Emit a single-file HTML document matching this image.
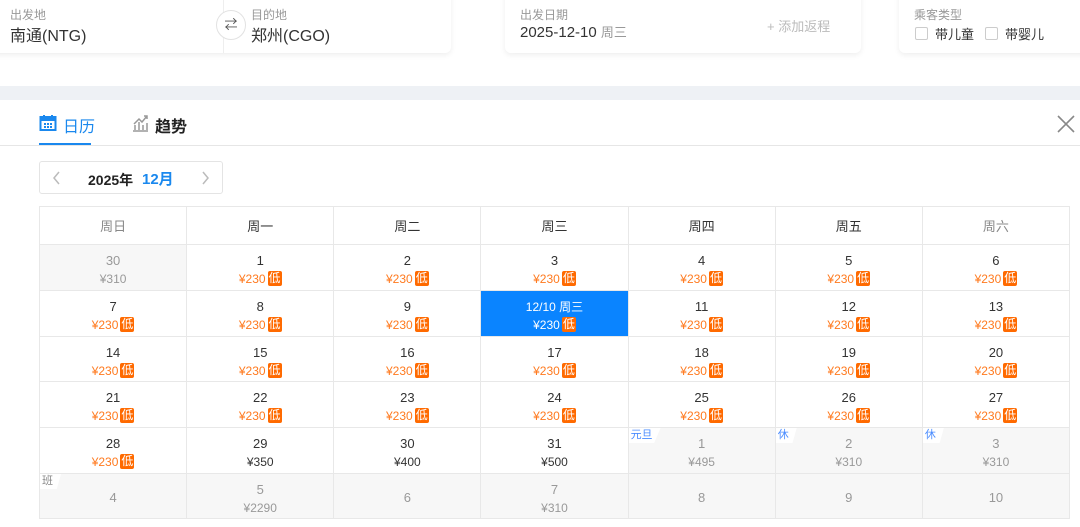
<!DOCTYPE html>
<html><head><meta charset="utf-8"><style>
*{margin:0;padding:0;box-sizing:border-box}
body{width:1080px;height:527px;background:#fff;font-family:"Liberation Sans","Noto Sans CJK SC",sans-serif;position:relative;overflow:hidden;color:#333}
.card{position:absolute;background:#fff;border-radius:6px;box-shadow:0 2px 6px rgba(0,0,0,.07);top:-10px;height:63px}
.lbl{position:absolute;font-size:12px;color:#999}
.val{position:absolute;font-size:16px;color:#333}
.band{position:absolute;left:0;top:86px;width:1080px;height:14px;background:#eef1f5}
table{position:absolute;left:39px;top:206px;border-collapse:collapse;table-layout:fixed;width:1031px}
td{border:1px solid #e8e8e8;text-align:center;vertical-align:top;position:relative;width:147px}
th{border:1px solid #e8e8e8;height:38px;font-weight:normal;font-size:13px;color:#333}
td .n{display:block;font-size:13px;line-height:16px;margin-top:8px;color:#333}
td .p{display:block;font-size:12px;line-height:16px;margin-top:2px;color:#ff7a1f}
.lo{display:inline-block;font-style:normal;background:#ff6a00;color:#fff;font-size:12px;line-height:15px;height:15px;padding:0 1px;border-radius:2px;margin-left:2px;vertical-align:top;margin-top:0}
.g{background:#f7f7f7}
.g .n{color:#999}.g .p{color:#999}
.d .p{color:#333}
.sel{background:#0a84ff}
.sel .n,.sel .p{color:#fff}
.tag{position:absolute;left:0;top:0;font-size:11px;line-height:15px;padding:0 8px 0 2px;background:#fff;clip-path:polygon(0 0,100% 0,80% 100%,0 100%);color:#4a8cff}
</style></head><body>
<div class="card" style="left:-10px;width:461px">
 <div class="lbl" style="left:20px;top:16px">出发地</div>
 <div class="val" style="left:20px;top:32px">南通(NTG)</div>
 <div style="position:absolute;left:233px;top:10px;width:1px;height:53px;background:#eee"></div>
 <div style="position:absolute;left:226px;top:20px;width:30px;height:30px;border:1px solid #e2e2e2;border-radius:50%;background:#fff;text-align:center;line-height:28px;font-size:13px;color:#555">⇄</div>
 <div class="lbl" style="left:261px;top:16px">目的地</div>
 <div class="val" style="left:261px;top:32px">郑州(CGO)</div>
</div>
<div class="card" style="left:505px;width:356px">
 <div class="lbl" style="left:15px;top:16px">出发日期</div>
 <div class="val" style="left:15px;top:32px;font-size:15px">2025-12-10 <span style="font-size:13px;color:#999">周三</span></div>
 <div style="position:absolute;left:262px;top:26px;font-size:13px;color:#bbb">+ 添加返程</div>
</div>
<div class="card" style="left:899px;width:200px">
 <div class="lbl" style="left:15px;top:16px">乘客类型</div>
 <div style="position:absolute;left:16px;top:37px;width:13px;height:13px;border:1px solid #ccc;border-radius:2px"></div>
 <div style="position:absolute;left:36px;top:34px;font-size:13px">带儿童</div>
 <div style="position:absolute;left:86px;top:37px;width:13px;height:13px;border:1px solid #ccc;border-radius:2px"></div>
 <div style="position:absolute;left:106px;top:34px;font-size:13px">带婴儿</div>
</div>
<div class="band"></div>
<svg style="position:absolute;left:39px;top:114px" width="18" height="18" viewBox="0 0 18 18"><rect x="1.5" y="3" width="15" height="13" fill="none" stroke="#1a88ee" stroke-width="2"/><rect x="1.5" y="3" width="15" height="4" fill="#1a88ee"/><rect x="4" y="1" width="2" height="3" fill="#1a88ee"/><rect x="12" y="1" width="2" height="3" fill="#1a88ee"/><g fill="#1a88ee"><rect x="5" y="9" width="2" height="2"/><rect x="8" y="9" width="2" height="2"/><rect x="11" y="9" width="2" height="2"/><rect x="5" y="12" width="2" height="2"/><rect x="8" y="12" width="2" height="2"/><rect x="11" y="12" width="2" height="2"/></g></svg>
<div style="position:absolute;left:63px;top:113px;font-size:16px;color:#1a88ee">日历</div>
<svg style="position:absolute;left:131px;top:114px" width="18" height="18" viewBox="0 0 18 18" fill="none" stroke="#999" stroke-width="1.5"><path d="M2 17h15M4 16v-5M8 16v-8M12 16v-5M16 16v-7M3 10l5-5 3 3 5-6M13 2h3v3"/></svg>
<div style="position:absolute;left:155px;top:113px;font-size:16px;font-weight:bold;color:#222">趋势</div>
<div style="position:absolute;left:39px;top:143px;width:52px;height:2px;background:#1a88ee"></div>
<div style="position:absolute;left:0;top:145px;width:1080px;height:1px;background:#e6e6e6"></div>
<svg style="position:absolute;left:1057px;top:115px" width="18" height="18" viewBox="0 0 18 18" stroke="#888" stroke-width="1.6"><path d="M1 1L17 17M17 1L1 17"/></svg>
<div style="position:absolute;left:39px;top:161px;width:184px;height:33px;border:1px solid #e4e4e4;border-radius:3px">
 <svg style="position:absolute;left:12px;top:9px" width="10" height="14" viewBox="0 0 10 14" fill="none" stroke="#bbb" stroke-width="1.5"><path d="M7 1L2 7l5 6"/></svg>
 <span style="position:absolute;left:48px;top:8px;font-size:14px;font-weight:bold;color:#222">2025年</span>
 <span style="position:absolute;left:102px;top:6px;font-size:15px;font-weight:bold;color:#1a88ee">12月</span>
 <svg style="position:absolute;left:160px;top:9px" width="10" height="14" viewBox="0 0 10 14" fill="none" stroke="#bbb" stroke-width="1.5"><path d="M3 1l5 6-5 6"/></svg>
</div>
<table>
<tr><th style="color:#888">周日</th><th>周一</th><th>周二</th><th>周三</th><th>周四</th><th>周五</th><th style="color:#888">周六</th></tr>
<tr style="height:46px"><td class="g"><span class="n">30</span><span class="p">¥310</span></td>
<td><span class="n">1</span><span class="p">¥230<i class="lo">低</i></span></td>
<td><span class="n">2</span><span class="p">¥230<i class="lo">低</i></span></td>
<td><span class="n">3</span><span class="p">¥230<i class="lo">低</i></span></td>
<td><span class="n">4</span><span class="p">¥230<i class="lo">低</i></span></td>
<td><span class="n">5</span><span class="p">¥230<i class="lo">低</i></span></td>
<td><span class="n">6</span><span class="p">¥230<i class="lo">低</i></span></td></tr>
<tr style="height:46px"><td><span class="n">7</span><span class="p">¥230<i class="lo">低</i></span></td>
<td><span class="n">8</span><span class="p">¥230<i class="lo">低</i></span></td>
<td><span class="n">9</span><span class="p">¥230<i class="lo">低</i></span></td>
<td class="sel"><span class="n" style="font-size:12px">12/10 周三</span><span class="p">¥230<i class="lo">低</i></span></td>
<td><span class="n">11</span><span class="p">¥230<i class="lo">低</i></span></td>
<td><span class="n">12</span><span class="p">¥230<i class="lo">低</i></span></td>
<td><span class="n">13</span><span class="p">¥230<i class="lo">低</i></span></td></tr>
<tr style="height:45px"><td><span class="n">14</span><span class="p">¥230<i class="lo">低</i></span></td>
<td><span class="n">15</span><span class="p">¥230<i class="lo">低</i></span></td>
<td><span class="n">16</span><span class="p">¥230<i class="lo">低</i></span></td>
<td><span class="n">17</span><span class="p">¥230<i class="lo">低</i></span></td>
<td><span class="n">18</span><span class="p">¥230<i class="lo">低</i></span></td>
<td><span class="n">19</span><span class="p">¥230<i class="lo">低</i></span></td>
<td><span class="n">20</span><span class="p">¥230<i class="lo">低</i></span></td></tr>
<tr style="height:46px"><td><span class="n">21</span><span class="p">¥230<i class="lo">低</i></span></td>
<td><span class="n">22</span><span class="p">¥230<i class="lo">低</i></span></td>
<td><span class="n">23</span><span class="p">¥230<i class="lo">低</i></span></td>
<td><span class="n">24</span><span class="p">¥230<i class="lo">低</i></span></td>
<td><span class="n">25</span><span class="p">¥230<i class="lo">低</i></span></td>
<td><span class="n">26</span><span class="p">¥230<i class="lo">低</i></span></td>
<td><span class="n">27</span><span class="p">¥230<i class="lo">低</i></span></td></tr>
<tr style="height:46px"><td><span class="n">28</span><span class="p">¥230<i class="lo">低</i></span></td>
<td class="d"><span class="n">29</span><span class="p">¥350</span></td>
<td class="d"><span class="n">30</span><span class="p">¥400</span></td>
<td class="d"><span class="n">31</span><span class="p">¥500</span></td>
<td class="g"><span class="tag">元旦</span><span class="n">1</span><span class="p">¥495</span></td>
<td class="g"><span class="tag">休</span><span class="n">2</span><span class="p">¥310</span></td>
<td class="g"><span class="tag">休</span><span class="n">3</span><span class="p">¥310</span></td></tr>
<tr style="height:45px"><td class="g"><span class="tag" style="color:#888">班</span><span class="n" style="margin-top:16px">4</span></td>
<td class="g"><span class="n">5</span><span class="p">¥2290</span></td>
<td class="g"><span class="n" style="margin-top:16px">6</span></td>
<td class="g"><span class="n">7</span><span class="p">¥310</span></td>
<td class="g"><span class="n" style="margin-top:16px">8</span></td>
<td class="g"><span class="n" style="margin-top:16px">9</span></td>
<td class="g"><span class="n" style="margin-top:16px">10</span></td></tr>
</table>
</body></html>
